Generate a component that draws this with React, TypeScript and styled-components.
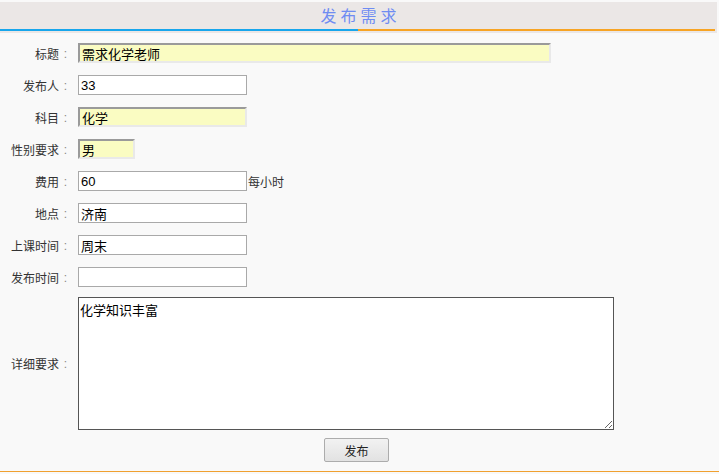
import React from "react";
import styled, { createGlobalStyle } from "styled-components";

const GlobalStyle = createGlobalStyle`
  html, body {
    margin: 0;
    padding: 0;
    background: #f9f9f9;
  }
  body {
    font-family: "Liberation Sans", "Noto Sans CJK SC", sans-serif;
    font-size: 12px;
    color: #333;
  }
`;

const Page = styled.div`
  width: 719px;
  height: 474px;
  padding-top: 2px;
  box-sizing: border-box;
  background: #f9f9f9;
  display: flex;
  flex-direction: column;
`;

const Header = styled.div`
  width: 717px;
  height: 31px;
  background: #ebe7e6;
  display: flex;
  flex-direction: column;
`;

const Title = styled.div`
  height: 27px;
  line-height: 29px;
  text-align: center;
  font-size: 16px;
  letter-spacing: 4px;
  padding-left: 4px;
  color: #6f8cf2;
`;

const Stripe = styled.div`
  width: 715px;
  height: 2px;
  display: flex;
  span {
    flex: 1;
    background: #17a6ec;
  }
  span + span {
    background: #f7a424;
  }
`;

const Form = styled.form`
  display: flex;
  flex-direction: column;
  padding-top: 10px;
`;

const Row = styled.div<{ $mt?: number }>`
  display: flex;
  align-items: center;
  margin-top: ${(p) => p.$mt ?? 12}px;
  &:first-child {
    margin-top: 0;
  }
`;

const Label = styled.label`
  width: 72px;
  margin-right: 6px;
  display: flex;
  justify-content: flex-end;
  white-space: nowrap;
  font-size: 12px;
  color: #333;
`;

const Colon = styled.span`
  width: 13px;
  padding-top: 2px;
  text-align: center;
  color: #888;
`;

const Field = styled.input<{ $w: number; $hl?: boolean }>`
  box-sizing: border-box;
  width: ${(p) => p.$w}px;
  height: 20px;
  margin: 0;
  padding: 0 2px;
  font-family: "Liberation Sans", "Noto Sans CJK SC", sans-serif;
  font-size: 13px;
  color: #000;
  outline: none;
  background: ${(p) => (p.$hl ? "#fafcc2" : "#fff")};
  border: ${(p) => (p.$hl ? "2px solid" : "1px solid #a9a9a9")};
  border-color: ${(p) => (p.$hl ? "#9a9a9a #e9e9e9 #e9e9e9 #9a9a9a" : "#a9a9a9")};
`;

const Unit = styled.span`
  margin-left: 1px;
  font-size: 12px;
  color: #333;
`;

const Area = styled.textarea`
  box-sizing: border-box;
  width: 536px;
  height: 133px;
  margin: 0;
  padding: 2px 1px;
  font-family: "Liberation Sans", "Noto Sans CJK SC", sans-serif;
  font-size: 13px;
  color: #000;
  border: 1px solid #555;
  background: #fff;
  outline: none;
`;

const Actions = styled.div`
  display: flex;
  justify-content: center;
  width: 713px;
  margin-top: 8px;
`;

const Button = styled.button`
  width: 65px;
  height: 24px;
  font-family: "Liberation Sans", "Noto Sans CJK SC", sans-serif;
  font-size: 12px;
  color: #222;
  border: 1px solid #acacac;
  border-radius: 2px;
  background: linear-gradient(#f2f2f2, #e2e2e2);
  cursor: pointer;
`;

const Footer = styled.div`
  margin-top: 9px;
  width: 719px;
  height: 1px;
  background: #f0a030;
`;

const FormRow: React.FC<{ label: string; mt?: number; children: React.ReactNode }> = ({
  label,
  mt,
  children,
}) => (
  <Row $mt={mt}>
    <Label>
      {label}
      <Colon>:</Colon>
    </Label>
    {children}
  </Row>
);

const App: React.FC = () => {
  return (
    <>
      <GlobalStyle />
      <Page>
        <Header>
          <Title>发布需求</Title>
          <Stripe>
            <span />
            <span />
          </Stripe>
        </Header>
        <Form onSubmit={(e) => e.preventDefault()}>
          <FormRow label="标题">
            <Field $w={473} $hl defaultValue="需求化学老师" />
          </FormRow>
          <FormRow label="发布人">
            <Field $w={169} defaultValue="33" />
          </FormRow>
          <FormRow label="科目">
            <Field $w={169} $hl defaultValue="化学" />
          </FormRow>
          <FormRow label="性别要求">
            <Field $w={57} $hl defaultValue="男" />
          </FormRow>
          <FormRow label="费用">
            <Field $w={169} defaultValue="60" />
            <Unit>每小时</Unit>
          </FormRow>
          <FormRow label="地点">
            <Field $w={169} defaultValue="济南" />
          </FormRow>
          <FormRow label="上课时间">
            <Field $w={169} defaultValue="周末" />
          </FormRow>
          <FormRow label="发布时间">
            <Field $w={169} defaultValue="" />
          </FormRow>
          <FormRow label="详细要求" mt={10}>
            <Area defaultValue="化学知识丰富" />
          </FormRow>
          <Actions>
            <Button type="submit">发布</Button>
          </Actions>
        </Form>
        <Footer />
      </Page>
    </>
  );
};

export default App;
